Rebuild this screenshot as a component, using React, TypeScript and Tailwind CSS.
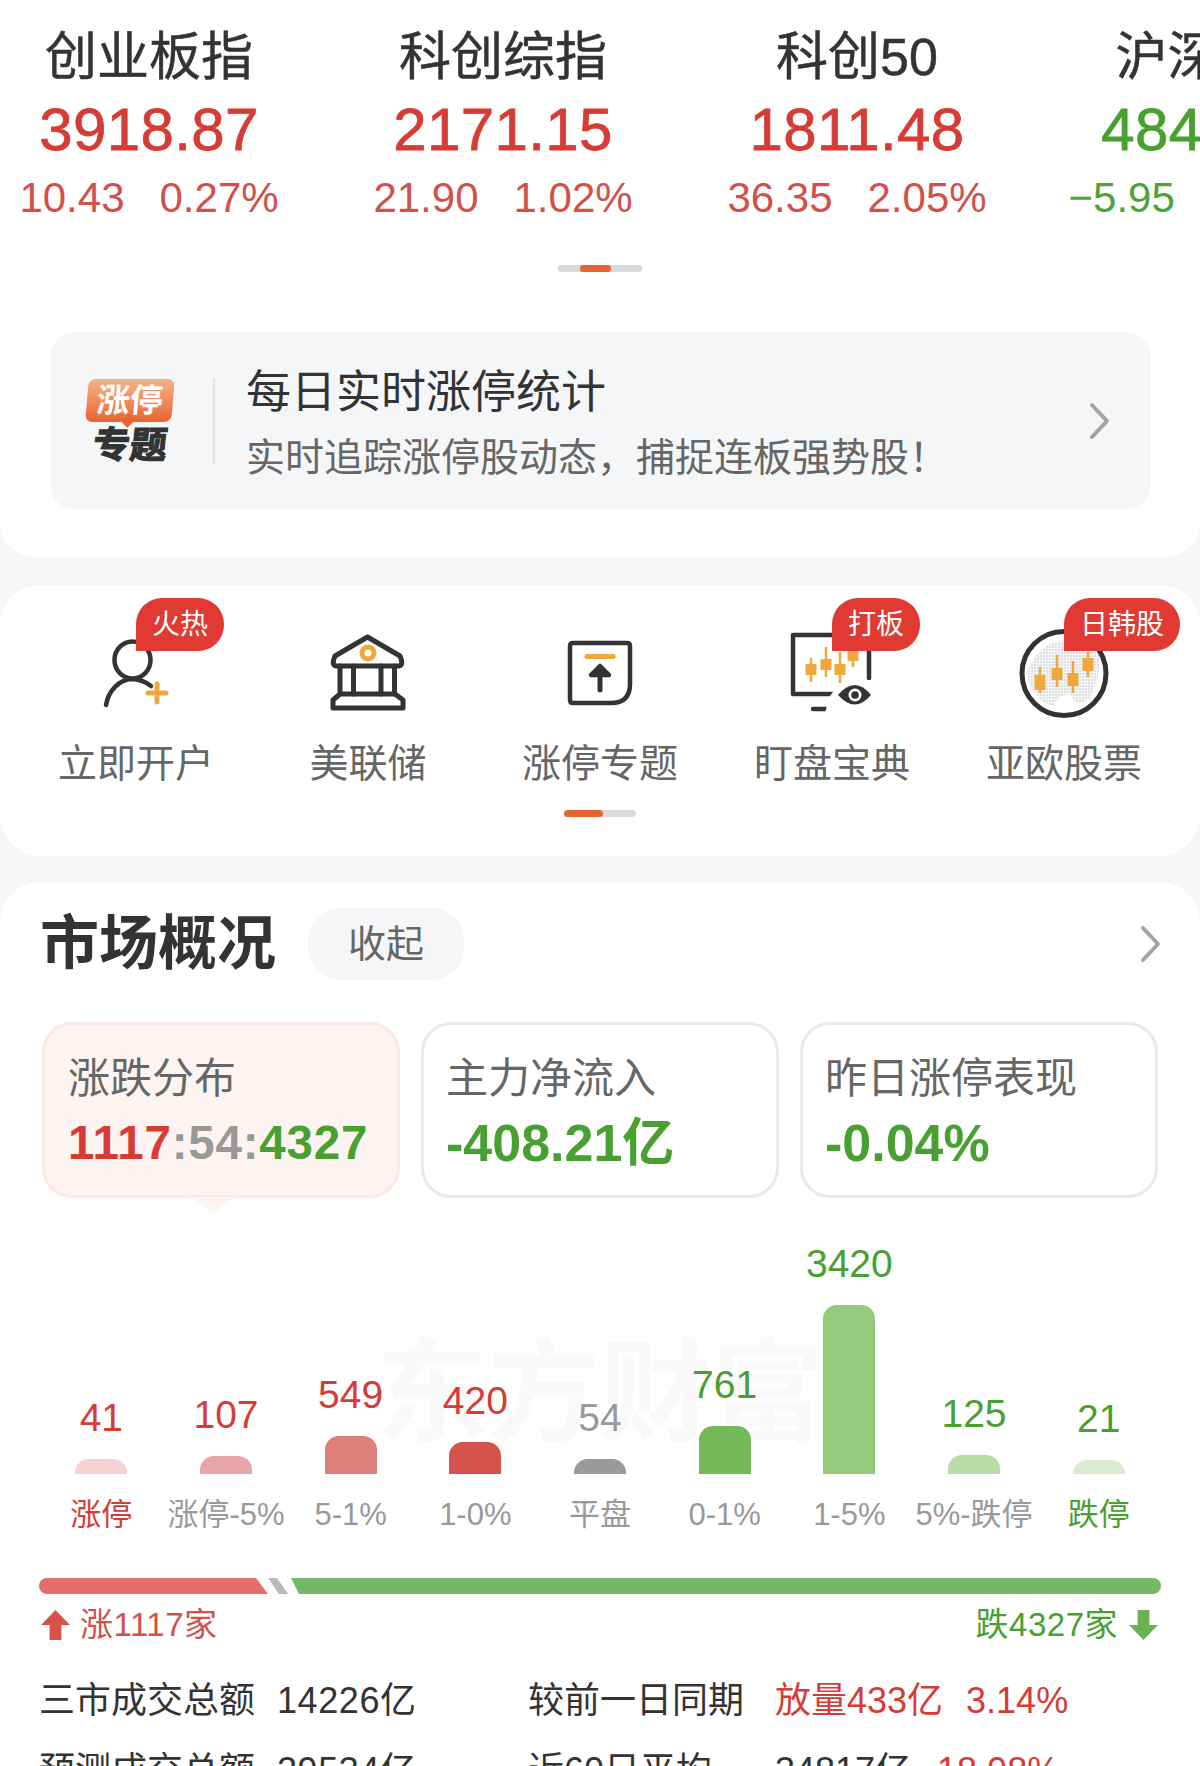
const indices = [
  { name: '创业板指', price: '3918.87', change: '10.43', pct: '0.27%', up: true },
  { name: '科创综指', price: '2171.15', change: '21.90', pct: '1.02%', up: true },
  { name: '科创50', price: '1811.48', change: '36.35', pct: '2.05%', up: true },
  { name: '沪深300', price: '4842.01', change: '−5.95', pct: '−0.12%', up: false },
];

const bars = [
  { value: '41', label: '涨停', height: 15, bar: 'bg-[#f4d2d2]', text: 'text-[#d63c35]', labelText: 'text-[#d63c35]' },
  { value: '107', label: '涨停-5%', height: 18, bar: 'bg-[#e8a6a8]', text: 'text-[#d63c35]', labelText: 'text-[#999999]' },
  { value: '549', label: '5-1%', height: 38, bar: 'bg-[#df7f7b]', text: 'text-[#d63c35]', labelText: 'text-[#999999]' },
  { value: '420', label: '1-0%', height: 32, bar: 'bg-[#d6524d]', text: 'text-[#d63c35]', labelText: 'text-[#999999]' },
  { value: '54', label: '平盘', height: 15, bar: 'bg-[#999999]', text: 'text-[#999999]', labelText: 'text-[#999999]' },
  { value: '761', label: '0-1%', height: 48, bar: 'bg-[#74b857]', text: 'text-[#47a02f]', labelText: 'text-[#999999]' },
  { value: '3420', label: '1-5%', height: 169, bar: 'bg-[#95ca7d]', text: 'text-[#47a02f]', labelText: 'text-[#999999]' },
  { value: '125', label: '5%-跌停', height: 19, bar: 'bg-[#b8dca8]', text: 'text-[#47a02f]', labelText: 'text-[#999999]' },
  { value: '21', label: '跌停', height: 14, bar: 'bg-[#d8ecd0]', text: 'text-[#47a02f]', labelText: 'text-[#47a02f]' },
];

function Chevron({ className }: { className: string }) {
  return (
    <svg viewBox="0 0 24 38" className={className} fill="none" stroke="#a3a3a3" strokeWidth="4" strokeLinecap="round" strokeLinejoin="round">
      <path d="M5 3 L20 19 L5 35" />
    </svg>
  );
}

function Candle({ x, top, bodyTop, bodyBottom, bottom }: { x: number; top: number; bodyTop: number; bodyBottom: number; bottom: number }) {
  return (
    <g>
      <line x1={x} x2={x} y1={top} y2={bottom} stroke="#f0a83c" strokeWidth="2.5" />
      <rect x={x - 5.5} y={bodyTop} width="11" height={bodyBottom - bodyTop} fill="#f0a83c" />
    </g>
  );
}

function PersonIcon() {
  return (
    <svg width="120" height="100" viewBox="0 0 120 100" fill="none" stroke="#333333" strokeWidth="4.5" strokeLinecap="round">
      <ellipse cx="56.5" cy="38" rx="18" ry="18.5" />
      <path d="M30 83 C33 67 44 58 55 57 C63 57 70 60 75 64" />
      <path d="M72 71 H90 M81 62 V80" stroke="#f0a83c" strokeWidth="5" />
    </svg>
  );
}

function BankIcon() {
  return (
    <svg width="120" height="100" viewBox="0 0 120 100" fill="none" stroke="#333333" strokeWidth="5" strokeLinecap="round" strokeLinejoin="round">
      <path d="M59.5 15 L92 34 Q96 43 91 44 H28 Q23 43 27 34 Z" />
      <path d="M32 44 V72 M45.5 44 V72 M73 44 V72 M86.5 44 V72" />
      <path d="M32 72 H87 L95 78 V86 H25 V78 Z" />
      <circle cx="60" cy="31" r="6" stroke="#f0a83c" />
    </svg>
  );
}

function UploadIcon() {
  return (
    <svg width="120" height="100" viewBox="0 0 120 100" fill="none" stroke="#333333" strokeWidth="4.5" strokeLinecap="round" strokeLinejoin="round">
      <path d="M33 21 H87 Q90 21 90 24 V62 Q90 81 71 81 H33 Q30 81 30 78 V24 Q30 21 33 21 Z" />
      <path d="M47 34.5 H73" stroke="#f0a83c" strokeWidth="5" />
      <path d="M60 44 L51 53 H69 Z" fill="#333333" />
      <path d="M60 52 V68" strokeWidth="5" />
    </svg>
  );
}

function MonitorIcon() {
  return (
    <svg width="120" height="100" viewBox="0 0 120 100" fill="none">
      <path d="M97 56 V13 H21 V72 H61 V87 H41" stroke="#333333" strokeWidth="4.5" strokeLinecap="round" strokeLinejoin="round" />
      <path d="M52 94 L58 74 L70 58 H102 V94 Z" fill="#ffffff" />
      <Candle x={39} top={36} bodyTop={42} bodyBottom={53} bottom={60} />
      <Candle x={54} top={25} bodyTop={37} bodyBottom={48} bottom={55} />
      <Candle x={68} top={30} bodyTop={42} bodyBottom={53} bottom={61} />
      <Candle x={81} top={20} bodyTop={29} bodyBottom={39} bottom={45} />
      <path d="M66 73 Q83 53 99 73 Q83 92 66 73 Z" fill="#333333" />
      <circle cx="83" cy="73" r="6.5" fill="#ffffff" />
      <circle cx="83" cy="73" r="3.8" fill="#333333" />
    </svg>
  );
}

function GlobeIcon() {
  return (
    <svg width="120" height="100" viewBox="0 0 120 100" fill="none">
      <defs>
        <pattern id="map-dots" width="3" height="3" patternUnits="userSpaceOnUse">
          <rect width="2.4" height="2.4" fill="#dfe1e4" />
        </pattern>
      </defs>
      <path d="M23 50 Q30 30 50 20 L88 18 Q100 35 94 55 L86 76 Q72 88 67 73 Q56 70 49 84 L39 80 Q24 68 23 50 Z" fill="url(#map-dots)" />
      <circle cx="60" cy="51.5" r="42" stroke="#333333" strokeWidth="5" />
      <Candle x={36} top={45} bodyTop={53} bodyBottom={68} bottom={71} />
      <Candle x={53} top={33} bodyTop={46} bodyBottom={58} bottom={65} />
      <Candle x={69} top={39} bodyTop={51} bodyBottom={64} bottom={71} />
      <Candle x={84} top={30} bodyTop={36} bodyBottom={49} bottom={55} />
    </svg>
  );
}

const shortcuts = [
  { label: '立即开户', badge: '火热', icon: <PersonIcon /> },
  { label: '美联储', icon: <BankIcon /> },
  { label: '涨停专题', icon: <UploadIcon /> },
  { label: '盯盘宝典', badge: '打板', icon: <MonitorIcon /> },
  { label: '亚欧股票', badge: '日韩股', icon: <GlobeIcon /> },
];

export default function App() {
  return (
    <div className="h-[1766px] overflow-hidden bg-[#f5f6f8] font-['Liberation_Sans','Noto_Sans_CJK_SC',sans-serif] text-[#333333]">
      {/* Index quotes + banner */}
      <section className="h-[558px] overflow-hidden rounded-b-[36px] bg-white">
        <div className="ml-[-28px] flex w-[1416px] pt-[31px]">
          {indices.map((item) => (
            <div key={item.name} className="flex w-[354px] flex-col items-center">
              <div className="whitespace-nowrap text-[52px] leading-[52px] [-webkit-text-stroke:0.5px_currentColor]">{item.name}</div>
              <div className={`mt-[17px] text-[60px] leading-[60px] tracking-[0.4px] [-webkit-text-stroke:0.8px_currentColor] ${item.up ? 'text-[#d63c35]' : 'text-[#47a02f]'}`}>
                {item.price}
              </div>
              <div className={`mt-[17px] flex gap-[35px] whitespace-nowrap text-[42px] leading-[42px] ${item.up ? 'text-[#d2504a]' : 'text-[#4ea338]'}`}>
                <span>{item.change}</span>
                <span>{item.pct}</span>
              </div>
            </div>
          ))}
        </div>

        <div className="ml-[558px] mt-[46px] h-[7px] w-[84px] rounded-[3px] bg-[#d9dadf]">
          <div className="ml-[22px] h-[7px] w-[31px] rounded-[3px] bg-[#e5652d]" />
        </div>

        <div className="ml-[50px] mt-[60px] flex h-[178px] w-[1101px] items-center rounded-[26px] bg-[#f5f6f8]">
          <div className="ml-[37px] flex w-[86px] flex-col items-center">
            <div className="relative flex h-[43px] w-[86px] skew-x-[-5deg] items-center justify-center rounded-[7px] bg-gradient-to-b from-[#f5b287] to-[#e8642f] text-[33px] font-bold leading-none text-white">
              涨停
              <span className="absolute bottom-[-4px] left-[38px] h-[9px] w-[9px] rotate-45 bg-[#e8642f]" />
            </div>
            <div className="mt-[7px] skew-x-[-6deg] whitespace-nowrap text-[37px] font-bold leading-[34px] text-[#333333] [-webkit-text-stroke:1.2px_currentColor]">专题</div>
          </div>
          <div className="ml-[40px] h-[86px] w-[2px] bg-[#dfe0e3]" />
          <div className="ml-[31px] flex flex-1 flex-col">
            <div className="mt-[5px] text-[45px] leading-[46px] text-[#333333]">每日实时涨停统计</div>
            <div className="mt-[22px] whitespace-nowrap text-[39px] leading-[40px] text-[#666666]">{'实时追踪涨停股动态\uFF0C捕捉连板强势股\uFF01'}</div>
          </div>
          <Chevron className="mr-[40px] h-[38px] w-[24px]" />
        </div>
      </section>

      {/* Shortcuts */}
      <section className="mt-[27px] h-[271px] rounded-[40px] bg-white pt-[37px]">
        <div className="ml-[20px] grid w-[1160px] grid-cols-5">
          {shortcuts.map((item) => (
            <div key={item.label} className="relative flex flex-col items-center">
              <div className="h-[100px]">{item.icon}</div>
              <div className="mt-[23px] whitespace-nowrap text-[39px] leading-[38px] text-[#666666]">{item.label}</div>
              {item.badge && (
                <div className="absolute left-[116px] top-[-24px] flex h-[53px] items-center whitespace-nowrap rounded-[26px] rounded-bl-none bg-[#e03a32] px-[16px] text-[28px] leading-none text-white">
                  {item.badge}
                </div>
              )}
            </div>
          ))}
        </div>
        <div className="ml-[564px] mt-[27px] h-[7px] w-[72px] rounded-full bg-[#d9dadf]">
          <div className="h-[7px] w-[39px] rounded-full bg-[#e5652d]" />
        </div>
      </section>

      {/* Market overview */}
      <section className="mt-[26px] h-[884px] rounded-t-[40px] bg-white pt-[26px]">
        <div className="flex h-[72px] items-center pl-[40px] pr-[38px]">
          <h2 className="w-[233px] whitespace-nowrap text-[59px] font-bold leading-none">市场概况</h2>
          <button className="ml-[35px] h-[72px] w-[156px] rounded-[32px] bg-[#f5f6f8] text-[38px] text-[#666666]">收起</button>
          <Chevron className="ml-auto h-[38px] w-[24px]" />
        </div>

        <div className="ml-[42px] mt-[42px] flex gap-[21px]">
          <div className="relative h-[176px] w-[358px] rounded-[30px] border-[3px] border-[#fbe8e2] bg-[#fdf3f0] pl-[23px] pt-[32px]">
            <div className="text-[42px] leading-[44px] text-[#666666]">涨跌分布</div>
            <div className="mt-[18px] whitespace-nowrap text-[47.5px] font-bold leading-[48px] tracking-[0.8px]">
              <span className="text-[#d63c35]">1117</span>
              <span className="text-[#999999]">:54:</span>
              <span className="text-[#47a02f]">4327</span>
            </div>
            <span className="absolute left-[146px] top-[172px] h-[16px] w-[44px] bg-[#fdf3f0] [clip-path:polygon(0_0,100%_0,50%_100%)]" />
          </div>
          <div className="h-[176px] w-[358px] rounded-[30px] border-[3px] border-[#e8e9eb] pl-[22px] pt-[32px]">
            <div className="text-[42px] leading-[44px] text-[#666666]">主力净流入</div>
            <div className="mt-[18px] whitespace-nowrap text-[52px] font-bold leading-[48px] text-[#47a02f]">-408.21亿</div>
          </div>
          <div className="h-[176px] w-[358px] rounded-[30px] border-[3px] border-[#e8e9eb] pl-[22px] pt-[32px]">
            <div className="text-[42px] leading-[44px] text-[#666666]">昨日涨停表现</div>
            <div className="mt-[18px] whitespace-nowrap text-[52px] font-bold leading-[48px] text-[#47a02f]">-0.04%</div>
          </div>
        </div>

        <div className="relative ml-[39px] mt-[47px] w-[1122px]">
          <div className="absolute left-[337px] top-[95px] whitespace-nowrap text-[112px] font-bold leading-[109px] text-[#f9f9f9]">东方财富</div>
          <div className="relative grid grid-cols-9 items-end">
            {bars.map((item) => (
              <div key={item.label} className="flex flex-col items-center justify-end">
                <div className={`text-[39px] leading-[38px] ${item.text}`}>{item.value}</div>
                <div className={`mt-[22px] w-[52px] rounded-t-[14px] ${item.bar}`} style={{ height: item.height }} />
              </div>
            ))}
          </div>
          <div className="relative mt-[26px] grid grid-cols-9">
            {bars.map((item) => (
              <div key={item.label} className={`whitespace-nowrap text-center text-[31px] leading-[30px] ${item.labelText}`}>{item.label}</div>
            ))}
          </div>
        </div>

        <div className="ml-[39px] mt-[48px] flex h-[16px] w-[1122px]">
          <div className="h-[16px] w-[229px] rounded-l-full bg-[#e56d68] [clip-path:polygon(0_0,217px_0,100%_100%,0_100%)]" />
          <div className="h-[16px] w-[20px] bg-[#b9b9b9] [clip-path:polygon(0_0,9px_0,100%_100%,11px_100%)]" />
          <div className="ml-[3px] h-[16px] w-[870px] rounded-r-full bg-[#74b866] [clip-path:polygon(0_0,100%_0,100%_100%,8px_100%)]" />
        </div>

        <div className="ml-[41px] mr-[42px] mt-[14px] flex h-[34px] items-center justify-between text-[33px] leading-[34px] tracking-[0.5px]">
          <div className="flex items-center gap-[10px] text-[#d2504a]">
            <svg width="29" height="30" viewBox="0 0 27 28">
              <path d="M13.5 0 L27 14 H19 V28 H8 V14 H0 Z" fill="#d8524a" />
            </svg>
            <span>涨1117家</span>
          </div>
          <div className="flex items-center gap-[11px] text-[#47a02f]">
            <span>跌4327家</span>
            <svg width="29" height="30" viewBox="0 0 27 28">
              <path d="M13.5 28 L27 14 H19 V0 H8 V14 H0 Z" fill="#6cb24f" />
            </svg>
          </div>
        </div>

        <div className="ml-[39px] mt-[41px] flex text-[36px] leading-[36px]">
          <div className="w-[238px]">三市成交总额</div>
          <div className="w-[251px] tracking-[0.6px]">14226亿</div>
          <div className="w-[247px]">较前一日同期</div>
          <div className="flex gap-[23px] text-[#d63c35]">
            <span>放量433亿</span>
            <span>3.14%</span>
          </div>
        </div>
        <div className="ml-[39px] mt-[34px] flex text-[36px] leading-[36px]">
          <div className="w-[238px]">预测成交总额</div>
          <div className="w-[251px] tracking-[0.6px]">29534亿</div>
          <div className="w-[247px]">近60日平均</div>
          <div className="flex gap-[14px]">
            <span>34817亿</span>
            <span className="text-[#d63c35]">-18.98%</span>
          </div>
        </div>
      </section>
    </div>
  );
}
